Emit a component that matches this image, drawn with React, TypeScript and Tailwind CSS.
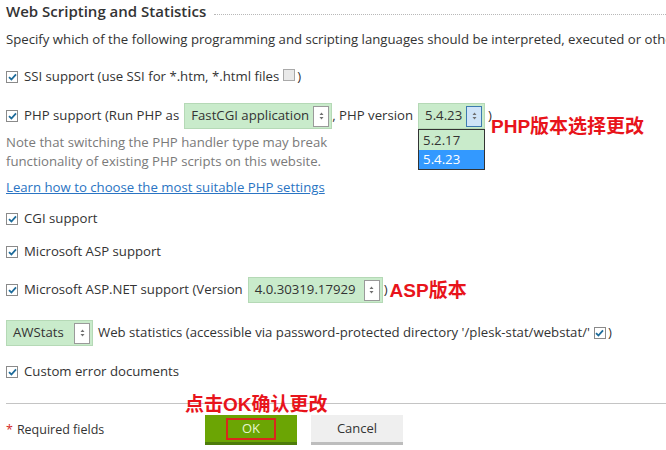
import React from "react";

const Check = ({ checked = true, light = false }: { checked?: boolean; light?: boolean }) => (
  <span
    className={`inline-flex h-[12px] w-[12px] shrink-0 items-center justify-center border ${
      light ? "border-[#a9a9a9] bg-[#e9e9e9]" : "border-[#8a8a8a] bg-white"
    }`}
  >
    {checked && (
      <svg width="9" height="8" viewBox="0 0 9 8">
        <path d="M1 4.2 L3.4 6.5 L8 1.3" fill="none" stroke="#1d6b9a" strokeWidth="1.8" />
      </svg>
    )}
  </span>
);

const Arrows = ({ focus = false }: { focus?: boolean }) => (
  <span
    className={`ml-auto mr-[2px] inline-flex h-[21px] w-[16px] shrink-0 items-center justify-center border ${
      focus ? "border-[#3d7ab0] bg-[#cfe4f8]" : "border-[#9a9a9a] bg-white"
    }`}
  >
    <svg width="5" height="8" viewBox="0 0 5 8">
      <path d="M2.5 0.5 L4.5 3 H0.5 Z M2.5 7.5 L4.5 5 H0.5 Z" fill="#707070" />
    </svg>
  </span>
);

const Select = ({ value, w, focus = false }: { value: string; w: string; focus?: boolean }) => (
  <span
    className={`inline-flex h-[26px] shrink-0 items-center border border-[#b5d9b6] bg-[#c9ebcb] pl-[6px] ${w}`}
  >
    <span className="mr-[4px] whitespace-nowrap">{value}</span>
    <Arrows focus={focus} />
  </span>
);

const Row = ({ children, className = "" }: { children: React.ReactNode; className?: string }) => (
  <div className={`flex items-center whitespace-nowrap ${className}`}>{children}</div>
);

const red = "font-['Liberation_Sans','Noto_Sans_CJK_SC',sans-serif] text-[19px] font-bold leading-none text-[#e8141b]";

export default function App() {
  return (
    <div className="h-[450px] w-[666px] overflow-hidden bg-white pl-[6px] font-['Open_Sans',sans-serif] text-[13.2px] text-[#333]">
      <div className="flex h-[22px] items-center">
        <h2 className="text-[15px] font-semibold text-[#333]">Web Scripting and Statistics</h2>
        <div className="ml-[8px] mt-[6px] flex-1 border-b border-dotted border-[#b8b8b8]" />
      </div>

      <Row className="mt-[8px] h-[20px]">
        Specify which of the following programming and scripting languages should be interpreted, executed or otherwise
        processed by the web server.
      </Row>

      <Row className="mt-[17px] h-[20px]">
        <Check />
        <span className="ml-[6px]">SSI support (use SSI for *.htm, *.html files</span>
        <span className="ml-[4px]">
          <Check checked={false} light />
        </span>
        <span className="ml-[2px]">)</span>
      </Row>

      <Row className="relative mt-[16px] h-[26px]">
        <Check />
        <span className="ml-[6px]">PHP support (Run PHP as</span>
        <span className="ml-[5px]">
          <Select value="FastCGI application" w="w-[148px]" />
        </span>
        <span>, PHP version</span>
        <span className="relative ml-[5px]">
          <Select value="5.4.23" w="w-[67px]" focus />
          <div className="absolute left-0 top-[26px] z-10 flex w-[67px] flex-col border border-[#333] bg-white">
            <div className="h-[20px] bg-[#c9ebcb] pl-[4px] leading-[20px]">5.2.17</div>
            <div className="h-[19px] bg-[#3399ff] pl-[4px] leading-[19px] text-white">5.4.23</div>
          </div>
        </span>
        <span className="ml-[3px]">)</span>
        <span className={`absolute left-[485px] top-[14px] ${red}`}>PHP版本选择更改</span>
      </Row>

      <div className="mt-[4px] leading-[19px] text-[#7a7a7a]">
        <div>Note that switching the PHP handler type may break</div>
        <div>functionality of existing PHP scripts on this website.</div>
      </div>

      <Row className="mt-[7px] h-[20px]">
        <a className="text-[#2a74c3] underline" href="#">
          Learn how to choose the most suitable PHP settings
        </a>
      </Row>

      <Row className="mt-[11px] h-[20px]">
        <Check />
        <span className="ml-[6px]">CGI support</span>
      </Row>

      <Row className="mt-[13px] h-[20px]">
        <Check />
        <span className="ml-[6px]">Microsoft ASP support</span>
      </Row>

      <Row className="mt-[15px] h-[26px]">
        <Check />
        <span className="ml-[6px]">Microsoft ASP.NET support (Version</span>
        <span className="ml-[5px]">
          <Select value="4.0.30319.17929" w="w-[135px]" />
        </span>
        <span className="ml-[1px]">)</span>
        <span className={`ml-[2px] ${red}`}>ASP版本</span>
      </Row>

      <Row className="mt-[17px] h-[26px]">
        <Select value="AWStats" w="w-[87px]" />
        <span className="ml-[5px]">
          Web statistics (accessible via password-protected directory '/plesk-stat/webstat/'
        </span>
        <span className="ml-[4px]">
          <Check />
        </span>
        <span className="ml-[2px]">)</span>
      </Row>

      <Row className="mt-[16px] h-[20px]">
        <Check />
        <span className="ml-[6px]">Custom error documents</span>
      </Row>

      <div className="relative mt-[21px] border-t border-[#c4c4c4]">
        <span className={`absolute left-[179px] top-[-9px] ${red}`}>点击OK确认更改</span>
      </div>

      <div className="mt-[11px] flex h-[30px] items-stretch text-[12.5px]">
        <div className="flex w-[199px] items-center">
          <span className="text-[#d42a2a]">*</span>
          <span className="ml-[4px]">Required fields</span>
        </div>
        <button className="flex w-[92px] items-center justify-center border-b-[3px] border-[#4d7c0a] bg-[#6ba504]">
          <span className="flex h-[22px] w-[50px] items-center justify-center border-2 border-[#d9281d] text-[13px] text-[#e8f7cf]">
            OK
          </span>
        </button>
        <button className="ml-[14px] flex w-[92px] items-center justify-center border-b-[3px] border-[#bdbdbd] bg-[#efefef] text-[13px] text-[#333]">
          Cancel
        </button>
      </div>
    </div>
  );
}
